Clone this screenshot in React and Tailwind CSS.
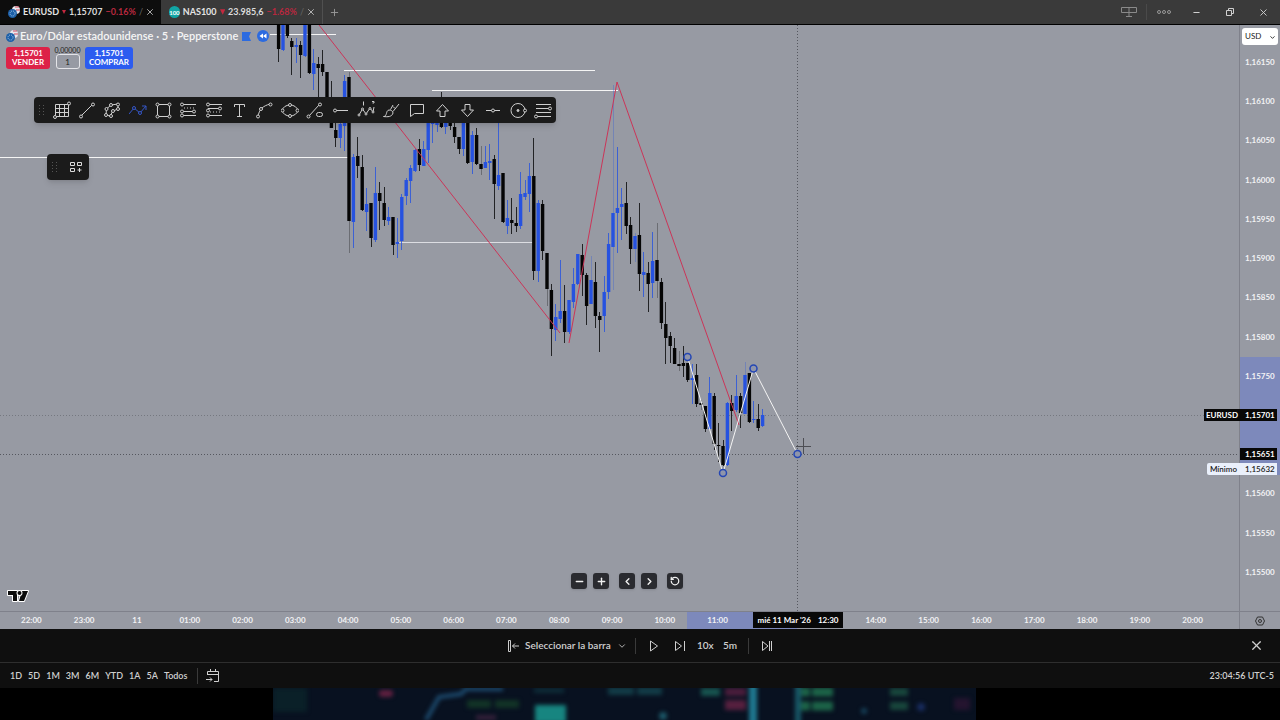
import { useState } from 'react'
import { ChevronDown, ChevronLeft, ChevronRight, Minus, Plus, RotateCcw, X } from 'lucide-react'

// up/down, body top, body bottom, wick top, wick bottom, wick opacity
const candles = [
  ['k', 20, 49, 20, 62], ['b', 20, 50, 20, 51], ['k', 20, 36, 20, 38], ['k', 41, 47, 38, 75],
  ['b', 45, 47, 38, 63], ['k', 45, 55, 41, 78], ['b', 20, 56, 20, 57], ['k', 20, 73, 20, 74],
  ['b', 63, 74, 49, 90], ['k', 64, 68, 57, 98], ['k', 64, 72, 50, 76], ['k', 72, 115, 72, 115],
  ['k', 98, 128, 81, 128], ['k', 130, 138, 122, 147], ['b', 124, 138, 122, 148], ['b', 81, 126, 75, 151],
  ['k', 77, 221, 72, 253, 0.3], ['b', 157, 222, 154, 248], ['k', 156, 166, 137, 178], ['k', 167, 210, 155, 211],
  ['b', 204, 212, 188, 231], ['k', 203, 238, 203, 247], ['b', 193, 240, 167, 242], ['k', 193, 201, 182, 230],
  ['k', 203, 220, 187, 226], ['b', 217, 221, 207, 225], ['k', 217, 245, 217, 255], ['b', 242, 244, 218, 258],
  ['b', 197, 241, 194, 250], ['b', 180, 196, 178, 205], ['b', 168, 181, 165, 203], ['b', 150, 171, 149, 172],
  ['k', 149, 165, 139, 171], ['b', 149, 166, 141, 166], ['b', 115, 150, 112, 163], ['b', 100, 124, 100, 143],
  ['b', 110, 125, 108, 132], ['k', 110, 127, 92, 128], ['b', 112, 127, 112, 134], ['k', 105, 126, 105, 130],
  ['k', 127, 137, 120, 143], ['k', 137, 149, 137, 154], ['b', 115, 149, 112, 156], ['k', 115, 163, 112, 164],
  ['b', 135, 162, 131, 174], ['k', 135, 164, 128, 165], ['k', 164, 169, 146, 175, 0.3], ['b', 162, 168, 146, 168],
  ['b', 161, 163, 144, 180], ['k', 159, 184, 155, 219], ['b', 175, 186, 115, 190], ['k', 173, 222, 173, 223],
  ['b', 218, 226, 200, 234], ['k', 220, 223, 198, 234], ['k', 223, 226, 207, 232], ['b', 194, 226, 172, 229],
  ['b', 193, 197, 180, 200], ['b', 176, 194, 163, 212], ['k', 176, 271, 138, 280], ['b', 203, 271, 200, 282],
  ['k', 204, 251, 200, 260], ['k', 253, 289, 253, 306, 0.3], ['k', 290, 329, 284, 356], ['b', 317, 330, 304, 341],
  ['b', 311, 319, 260, 323], ['k', 311, 332, 285, 343], ['b', 300, 332, 300, 334], ['b', 284, 302, 268, 308],
  ['b', 254, 284, 254, 285], ['k', 255, 275, 244, 296], ['k', 275, 306, 273, 325], ['b', 280, 304, 256, 304, 0.3],
  ['k', 282, 316, 262, 328], ['k', 316, 320, 312, 352], ['b', 292, 316, 276, 332], ['b', 244, 292, 233, 299],
  ['b', 213, 247, 85, 290, 0.3], ['b', 208, 213, 147, 253], ['b', 204, 207, 188, 240], ['k', 203, 226, 182, 234],
  ['k', 225, 249, 217, 264], ['b', 236, 249, 233, 262, 0.3], ['k', 235, 274, 203, 291], ['b', 272, 275, 252, 297],
  ['k', 273, 284, 262, 312], ['b', 261, 283, 232, 298], ['k', 260, 281, 223, 298, 0.3], ['k', 282, 323, 278, 329],
  ['k', 324, 338, 302, 364], ['k', 336, 346, 332, 363], ['k', 348, 364, 338, 364], ['k', 364, 366, 351, 371, 0.3],
  ['k', 363, 366, 346, 377], ['k', 363, 380, 363, 382], ['b', 378, 380, 364, 404], ['k', 375, 404, 364, 407],
  ['k', 403, 405, 400, 410, 0.3], ['k', 406, 429, 406, 432], ['b', 393, 429, 377, 430], ['k', 396, 444, 393, 450],
  ['k', 445, 446, 423, 462], ['k', 446, 465, 440, 466], ['b', 403, 465, 402, 466], ['k', 403, 411, 395, 431],
  ['b', 396, 410, 375, 412], ['k', 396, 413, 393, 428], ['b', 375, 414, 362, 414, 0.3], ['k', 373, 422, 373, 423],
  ['b', 419, 420, 401, 423], ['k', 419, 428, 404, 431], ['b', 415, 426, 409, 427],
]

const prices = ['1,16150', '1,16100', '1,16050', '1,16000', '1,15950', '1,15900', '1,15850',
  '1,15800', '1,15750', '', '', '1,15600', '1,15550', '1,15500']

const hours = ['22:00', '23:00', '11', '01:00', '02:00', '03:00', '04:00', '05:00', '06:00', '07:00',
  '08:00', '09:00', '10:00', '11:00', '', '', '14:00', '15:00', '16:00', '17:00', '18:00', '19:00', '20:00']

const ranges = ['1D', '5D', '1M', '3M', '6M', 'YTD', '1A', '5A', 'Todos']

const dot = (x, y) => <circle key={`${x}-${y}`} cx={x} cy={y} r="1.5" fill="#1b1b1b" />

const tools = [
  { label: 'Rejilla', art: <><path d="M2.500 3.500h13v12h-13zM6.500 3.500v12M11.500 3.500v12M2.500 7.500h13M2.500 11.500h13" />{dot(16, 2.5)}{dot(2, 16)}</> },
  { label: 'Línea de tendencia', art: <><path d="M3 15 15 3" />{dot(3, 15.5)}{dot(15, 3.5)}</> },
  { label: 'Ruta cerrada', art: <><path d="M3.500 8 8 4l7-1v5l-5 2-3 5-4-1z" />{dot(3.5, 8)}{dot(8, 4)}{dot(15, 3.5)}{dot(15, 8)}{dot(10, 10)}{dot(8, 15)}{dot(3, 14)}</> },
  { label: 'Polilínea', active: true, art: <><path d="m0 13 5-6 6 5 6-7M13 5h4v4" />{dot(5, 7)}{dot(11, 12)}</> },
  { label: 'Rectángulo', art: <><path d="M3.500 3.500h12v12h-12z" />{dot(3.5, 3.5)}{dot(15.5, 3.5)}{dot(3.5, 15.5)}{dot(15.5, 15.5)}</> },
  { label: 'Posición larga', art: <><path d="M3 3.500h14M3 10.500h12M3 14.500h14" /><path d="M5 7h10" strokeDasharray="1 2" />{dot(3, 3.5)}{dot(15, 10.5)}{dot(3, 10.5)}{dot(3, 14.5)}</> },
  { label: 'Posición corta', art: <><path d="M3 3.500h14M3 7.500h12M3 14.500h14" /><path d="M5 11h10" strokeDasharray="1 2" />{dot(3, 3.5)}{dot(15, 7.5)}{dot(3, 9.5)}{dot(3, 14.5)}</> },
  { label: 'Texto', art: <path d="M4.500 6V3.500h10V6M9.500 3.500v12M7 15.500h5" /> },
  { label: 'Curva', art: <><path d="M3 16C4 8 8 5 15 3" />{dot(3, 15.5)}{dot(6, 8)}{dot(15.5, 3.5)}</> },
  { label: 'Elipse', art: <><ellipse cx="9" cy="9.500" rx="7.500" ry="5.500" />{dot(9, 4)}{dot(9, 15)}{dot(1.5, 9.5)}{dot(16.5, 9.5)}</> },
  { label: 'Línea con nota', art: <><path d="M3 15 13 4" /><rect x="10.500" y="11.500" width="6" height="4" rx="2" />{dot(2.5, 15.5)}{dot(14, 3.5)}</> },
  { label: 'Rayo horizontal', art: <><path d="M4 9.500h13" />{dot(4, 9.5)}</> },
  { label: 'Ondas de Elliott', art: <><path d="m2 14 3.500-6L9 13l4-6 3 4 1-5" /><path d="M6.500.500v4M15 .500h2v1.500h-1.500" />{[[2, 14], [5.5, 8], [9, 13], [13, 7.500], [16, 11]].map(([x, y]) => <circle key={x} cx={x} cy={y} r="1" fill="#1b1b1b" />)}</> },
  { label: 'Pincel', art: <path d="M1.500 15.500c4 0 2-6 5.500-6.500 2 0 4 1 4 3-1 4-5.500 4-9.500 3.500zM8.500 8.500 11 4M11 10.500 17 3M11 5.500l2 2" /> },
  { label: 'Comentario', art: <path d="M3.500 3.500h13v9h-9l-4 3z" /> },
  { label: 'Flecha arriba', art: <path d="m9.500 3.500 6 6.500h-3.500v5.500H7V10H3.500z" /> },
  { label: 'Flecha abajo', art: <path d="m9.500 15.500-6-6.500H7V3.500h5V9h3.500z" /> },
  { label: 'Línea horizontal', art: <><path d="M2 9.500h14" />{dot(9, 9.5)}</> },
  { label: 'Círculo', art: <><circle cx="9" cy="9.500" r="7" /><circle cx="9" cy="9.500" r="1" fill="currentColor" />{dot(16, 9.5)}</> },
  { label: 'Retroceso de Fibonacci', art: <><path d="M2 3.500h15M2 7.500h15M2 11.500h15M2 15.500h15" />{dot(16, 7.5)}{dot(2, 15.5)}</> },
]

function Grip() {
  return (
    <svg className="w-2 h-3 text-[#555]" viewBox="0 0 8 12" fill="currentColor">
      {[1, 4, 7, 10].map(y => (
        <g key={y}><rect x="1" y={y} width="1" height="1" /><rect x="5" y={y} width="1" height="1" /></g>
      ))}
    </svg>
  )
}

function PairLogo() {
  return (
    <svg className="w-3 h-3 shrink-0" viewBox="0 0 12 12">
      <circle cx="8" cy="4" r="4" fill="#e8e8ee" />
      <path d="M7 1h4M8 4h4" stroke="#d14a5c" />
      <circle cx="4.500" cy="7.500" r="4.500" fill="#1c5fa8" />
      <circle cx="4.500" cy="7.500" r="2.500" fill="none" stroke="#a9c8e8" strokeDasharray="1 1" />
    </svg>
  )
}

function Tab({ logo, symbol, price, change, active }) {
  return (
    <div className={active
      ? 'flex items-center w-[161px] pl-2 pr-1 bg-[#0d0d0d]'
      : 'flex items-center w-[161px] pl-2 pr-1'}>
      {logo}
      <span className="ml-[3px] text-[9px] font-bold text-[#e4e4e4]">{symbol}</span>
      <svg className="ml-[3px] w-[6px] h-[6px]" viewBox="0 0 6 6"><path d="M0 0h6L3 6z" fill="#c4283f" /></svg>
      <span className="ml-[3px] text-[9px] font-bold text-[#dcdcdc]">{price}</span>
      <span className="ml-[3px] text-[9px] font-bold text-[#b8283f]">{change}</span>
      <span className="ml-[3px] text-[9px] text-[#666]">/</span>
      <button aria-label={`Cerrar ${symbol}`} className="ml-auto p-[2px] text-[#c8c8c8]">
        <X size={10} strokeWidth={2} />
      </button>
    </div>
  )
}

function Header() {
  return (
    <header className="flex items-stretch h-[25px] bg-[#3a3a3a] border-b border-black">
      <Tab active logo={<PairLogo />} symbol="EURUSD" price="1,15707" change="−0.16%" />
      <Tab
        logo={
          <span className="flex items-center justify-center w-3 h-3 rounded-full bg-[#12a5a5] text-[6px] font-bold text-white">100</span>
        }
        symbol="NAS100" price="23.985,6" change="−1.68%"
      />
      <button aria-label="Nueva pestaña" className="flex items-center justify-center w-6 border-l border-[#505050] text-[#999]">
        <Plus size={11} strokeWidth={2} />
      </button>
      <div className="ml-auto flex items-center text-[#d0d0d0]">
        <button aria-label="Diseño" className="w-[34px] flex justify-center text-[#8a8a8a]">
          <svg className="w-4 h-3" viewBox="0 0 16 12" fill="none" stroke="currentColor">
            <path d="M.500 1.500h15v5H.500zM8 1.500v9M5 10.500h6" />
          </svg>
        </button>
        <button aria-label="Más" className="w-[34px] h-4 flex items-center justify-center border-l border-[#4a4a4a] text-[#999]">
          <svg className="w-[14px] h-1" viewBox="0 0 14 4" fill="none" stroke="currentColor">
            <circle cx="2" cy="2" r="1.500" /><circle cx="7" cy="2" r="1.500" /><circle cx="12" cy="2" r="1.500" />
          </svg>
        </button>
        <button aria-label="Minimizar" className="w-[33px] flex justify-center"><Minus size={9} strokeWidth={3} /></button>
        <button aria-label="Restaurar" className="w-[33px] flex justify-center">
          <svg className="w-2 h-2" viewBox="0 0 8 8" fill="none" stroke="currentColor">
            <path d="M.500 2.500h5v5h-5zM2.500 2.500v-2h5v5h-2" />
          </svg>
        </button>
        <button aria-label="Cerrar" className="w-[34px] flex justify-center"><X size={11} strokeWidth={2} /></button>
      </div>
    </header>
  )
}

function Candle({ i, data }) {
  const [kind, top, bottom, wickTop, wickBottom, wickOpacity = 0.8] = data
  const x = 278.6 + i * 4.4
  const fill = kind === 'k' ? '#050505' : '#2652e0'
  return (
    <g fill={fill}>
      <rect x={Math.round(x - 0.5)} y={wickTop} width="1" height={wickBottom - wickTop} opacity={wickOpacity} />
      <rect x={x - 1.7} y={top} width="3.400" height={bottom - top} />
    </g>
  )
}

function Chart() {
  return (
    <svg className="absolute inset-0 w-full h-full" viewBox="0 25 1239 586" preserveAspectRatio="xMinYMin meet">
      <g stroke="#55575f" strokeDasharray="1 2">
        <path d="M0 415.500h1239" opacity="0.5" />
        <path d="M0 454.500h1239M797.500 25v586" />
      </g>
      <path d="M270 34.500h66M344 70.500h251M432 90.500h186M0 157.500h348" stroke="#f5f5f5" fill="none" />
      <path d="M398 242.500h137" stroke="#dcdde2" />
      {candles.map((c, i) => <Candle key={i} i={i} data={c} />)}
      <path d="M319 25 560 333M569 343 617 82l122 343" stroke="#cb3558" fill="none" />
      <path d="m687.500 357 35.500 116 30.500-104.500 44 85.500" stroke="#f4f4f4" fill="none" />
      {[[687.5, 357], [723, 473], [753.5, 368.5], [797.5, 454]].map(([x, y]) => (
        <circle key={x} cx={x} cy={y} r="3.500" fill="#8f95aa" stroke="#2446b4" strokeWidth="1.500" />
      ))}
      <path d="M796 446.500h15M803.500 438v16" stroke="#4d4e54" />
    </svg>
  )
}

function Legend() {
  const [qty, setQty] = useState('1')
  return (
    <div className="absolute left-[6px] top-[3px] flex flex-col gap-[3px]">
      <div className="flex items-center h-4">
        <PairLogo />
        <h1 className="ml-[2px] text-[11px] leading-4 font-semibold text-[#f5f5f5] whitespace-nowrap">
          Euro/Dólar estadounidense · 5 · Pepperstone
        </h1>
        <svg className="ml-1 w-[9px] h-[9px]" viewBox="0 0 9 9"><path d="M0 0h9L7 4.500 9 9H0z" fill="#2c6be0" /></svg>
        <svg className="ml-[6px] w-3 h-3" viewBox="0 0 12 12">
          <circle cx="6" cy="6" r="6" fill="#2c6be0" />
          <path d="M6 3.500v5L2.500 6zM9.500 3.500v5L6 6z" fill="#fff" />
        </svg>
      </div>
      <div className="flex items-start">
        <button className="w-[44px] h-[22px] rounded-[3px] bg-[#dd2248] text-white text-[8px] leading-[9px] font-bold">
          <span className="block">1,1570<span className="text-[7px]">1</span></span>
          <span className="block">VENDER</span>
        </button>
        <div className="flex flex-col items-center w-[35px]">
          <label htmlFor="qty" className="text-[7px] leading-[7px] text-[#222]">0,00000</label>
          <input id="qty" value={qty} onChange={e => setQty(e.target.value)}
            className="w-6 h-[15px] rounded-[3px] border border-[#e4e4e8] text-center text-[8px] text-[#222]" />
        </div>
        <button className="w-[48px] h-[22px] rounded-[3px] bg-[#2c5cf0] text-white text-[8px] leading-[9px] font-bold">
          <span className="block">1,1570<span className="text-[7px]">1</span></span>
          <span className="block">COMPRAR</span>
        </button>
      </div>
    </div>
  )
}

function DrawingBar() {
  return (
    <>
      <div className="absolute left-[34px] top-[72px] flex items-stretch w-[522px] h-[26px] rounded bg-[#1b1b1b] shadow-md">
        <div className="flex items-center justify-center w-[15px]"><Grip /></div>
        {tools.map(t => (
          <button key={t.label} aria-label={t.label}
            className={t.active ? 'flex-1 flex items-center justify-center text-[#3557c8]' : 'flex-1 flex items-center justify-center text-[#cfcfcf]'}>
            <svg className="w-[18px] h-[18px]" viewBox="0 0 18 18" fill="none" stroke="currentColor">{t.art}</svg>
          </button>
        ))}
      </div>
      <div className="absolute left-[47px] top-[129px] flex items-center w-[42px] h-[26px] rounded bg-[#1b1b1b] shadow-md">
        <div className="flex items-center justify-center w-[15px]"><Grip /></div>
        <button aria-label="Añadir herramienta" className="flex-1 flex items-center justify-center text-[#dcdcdc]">
          <svg className="w-3 h-3" viewBox="0 0 12 12" fill="none" stroke="currentColor">
            <path d="M.500 1.500h4v3h-4zM7.500 1.500h4v3h-4zM.500 7.500h4v3h-4zM9.500 7v4M7.500 9h4" />
          </svg>
        </button>
      </div>
    </>
  )
}

function NavButton({ label, children }) {
  return (
    <button aria-label={label} className="flex items-center justify-center w-4 h-4 rounded-[3px] bg-[#2a2b30] text-[#f0f0f0] shadow">
      {children}
    </button>
  )
}

function ZoomControls() {
  return (
    <div className="absolute left-[571px] bottom-[22px] flex gap-[10px]">
      <div className="flex gap-[6px]">
        <NavButton label="Alejar"><Minus size={11} strokeWidth={3} /></NavButton>
        <NavButton label="Acercar"><Plus size={11} strokeWidth={3} /></NavButton>
      </div>
      <div className="flex gap-[6px]">
        <NavButton label="Atrás"><ChevronLeft size={11} strokeWidth={3} /></NavButton>
        <NavButton label="Adelante"><ChevronRight size={11} strokeWidth={3} /></NavButton>
      </div>
      <NavButton label="Restablecer"><RotateCcw size={10} strokeWidth={3} /></NavButton>
    </div>
  )
}

function PriceAxis() {
  return (
    <div className="relative flex flex-col w-[41px] border-l border-[#7f818b] pb-[31px]">
      {/* Selected price range */}
      <div className="absolute inset-x-0 top-[332px] h-[118px] bg-[#7d89bb]" />
      <div className="relative mt-[3px] mx-[2px] h-[17px]">
        <select aria-label="Divisa" className="block w-full h-[17px] rounded-[3px] bg-white pl-[3px] text-[8px] leading-[17px] text-[#222] appearance-none">
          <option>USD</option>
        </select>
        <ChevronDown size={7} strokeWidth={3} className="absolute right-[2px] top-[6px] text-[#222]" />
      </div>
      <div className="relative flex-1 flex flex-col justify-between mt-[9px] pl-[5px] text-[8px] leading-4 font-bold text-[#f2f2f4]">
        {prices.map((p, i) => <span key={i} className="h-4">{p}</span>)}
      </div>

      {/* Price flags */}
      <div className="absolute right-[3px] top-[384px] flex h-3 text-[8px] leading-3 font-bold text-white whitespace-nowrap">
        <span className="px-[2px] bg-[#080808]">EURUSD</span>
        <span className="w-[37px] pl-[5px] bg-[#080808]">1,15701</span>
      </div>
      <div className="absolute right-[3px] top-[423px] w-[37px] h-3 pl-[5px] bg-[#080808] text-[8px] leading-3 font-bold text-white">
        1,15651
      </div>
      <div className="absolute right-[3px] top-[438px] flex h-3 text-[8px] leading-3 font-semibold text-[#222] whitespace-nowrap">
        <span className="px-[3px] rounded-l-[2px] bg-[#eaf0fb]">Mínimo</span>
        <span className="w-[37px] pl-[5px] bg-[#eaf0fb]">1,15632</span>
      </div>
    </div>
  )
}

function TimeAxis() {
  return (
    <div className="relative flex h-[18px] border-t border-[#7f818b] text-[8px] leading-4 font-bold text-[#f2f2f4]">
      <div className="absolute left-[687px] inset-y-0 w-[110px] bg-[#7d89bb]" />
      <div className="relative flex flex-1 pl-[5px] pr-5">
        {hours.map((h, i) => <span key={i} className="flex-1 text-center">{h}</span>)}
      </div>
      <div className="absolute left-[753px] top-0 w-[90px] h-4 flex items-center justify-center gap-[7px] bg-[#080808] text-white">
        <span>mié 11 Mar '26</span><span>12:30</span>
      </div>
      <button aria-label="Ajustes" className="w-[41px] flex items-center justify-center border-l border-[#7f818b] text-[#333]">
        <svg className="w-[10px] h-[10px]" viewBox="0 0 10 10" fill="none" stroke="currentColor">
          <path d="M2.500 1h5l2 4-2 4h-5l-2-4z" /><circle cx="5" cy="5" r="1.500" />
        </svg>
      </button>
    </div>
  )
}

function ReplayBar() {
  return (
    <div className="relative flex items-center h-[34px] pl-[507px] bg-[#0f0f0f] border-b border-[#2e2e2e] text-[10px] font-semibold text-[#cfcfcf]">
      <button className="flex items-center">
        <svg className="w-3 h-3" viewBox="0 0 12 12" fill="none" stroke="currentColor">
          <path d="M1.500 .500h2v11h-2zM12 6H5.500M8 3.500 5.500 6 8 8.500" />
        </svg>
        <span className="ml-[6px] w-[88px] text-left whitespace-nowrap">Seleccionar la barra</span>
        <ChevronDown size={10} className="ml-1" />
      </button>
      <div className="ml-2 w-px h-4 bg-[#3a3a3a]" />
      <button aria-label="Reproducir" className="ml-3">
        <svg className="w-3 h-3" viewBox="0 0 12 12" fill="none" stroke="currentColor"><path d="M2.500 1v10L9.500 6z" /></svg>
      </button>
      <button aria-label="Avanzar" className="ml-[14px]">
        <svg className="w-3 h-3" viewBox="0 0 12 12" fill="none" stroke="currentColor"><path d="M1.500 1.500v9L7.500 6zM10.500 1v10" /></svg>
      </button>
      <button className="ml-[11px] w-4 whitespace-nowrap">10x</button>
      <button className="ml-[9px] w-4 whitespace-nowrap">5m</button>
      <div className="ml-[10px] w-px h-4 bg-[#3a3a3a]" />
      <button aria-label="Tiempo real" className="ml-3">
        <svg className="w-3 h-3" viewBox="0 0 12 12" fill="none" stroke="currentColor"><path d="M1.500 1.500v9L7 6zM8.500 1v10M10.500 1v10" /></svg>
      </button>
      <button aria-label="Cerrar reproducción" className="ml-auto mr-4"><X size={15} strokeWidth={2} /></button>
    </div>
  )
}

function RangeBar() {
  return (
    <div className="flex items-center h-[25px] px-[6px] bg-[#0f0f0f] text-[9px] font-semibold text-[#cfcfcf]">
      <div className="flex gap-[6px] pl-1">
        {ranges.map(r => <button key={r}>{r}</button>)}
      </div>
      <div className="ml-[10px] w-px h-4 bg-[#3a3a3a]" />
      <button aria-label="Ir a la fecha" className="ml-2">
        <svg className="w-[14px] h-[14px]" viewBox="0 0 14 14" fill="none" stroke="currentColor">
          <path d="M1.500 6V2.500h11v10H8M1.500 5.500h11M4.500 0v3M9.500 0v3M0 10.500h6M4 8.500l2 2-2 2" />
        </svg>
      </button>
      <span className="ml-auto">23:04:56 UTC-5</span>
    </div>
  )
}

function Backdrop() {
  return (
    <div className="h-8 pl-[273px] bg-black overflow-hidden">
      <svg className="w-[703px] h-8 bg-[#081120]" viewBox="273 688 703 32">
        <g className="blur-[2px]">
          <rect x="273" y="688" width="34" height="24" fill="#0a2028" />
          <path d="m426 720 13-23 22-3 5-5h37" fill="none" stroke="#1d4c70" strokeWidth="4" />
          <rect x="379" y="690" width="14" height="7" rx="3" fill="#602040" />
          <path d="M467 704h24M495 704h24" stroke="#123326" strokeWidth="8" />
          <rect x="476" y="715" width="20" height="5" fill="#35203a" />
          <rect x="535" y="705" width="31" height="18" fill="#178580" />
          <rect x="534" y="688" width="30" height="5" fill="#0e2c38" />
          <path d="M608 691h26M637 691h25" stroke="#123b46" strokeWidth="8" />
          <circle cx="663" cy="716" r="4" fill="#1c5868" />
          <rect x="701" y="688" width="19" height="8" fill="#17544f" />
          <rect x="725" y="688" width="21" height="8" fill="#4b1d3c" />
          <rect x="725" y="700" width="21" height="10" fill="#56203f" />
          <rect x="749" y="682" width="8" height="44" fill="#1f7890" />
          <rect x="795" y="682" width="6" height="44" fill="#175666" />
          <path d="M801 692h9M812 692h21M801 706h9M812 706h21" stroke="#1c6448" strokeWidth="9" />
          <circle cx="864" cy="711" r="3" fill="#17445c" />
          <path d="M890 692h18M890 706h18" stroke="#18463c" strokeWidth="8" />
          <circle cx="921" cy="707" r="4" fill="#182c60" />
          <rect x="954" y="698" width="16" height="12" fill="#24142f" />
        </g>
      </svg>
    </div>
  )
}

export default function App() {
  return (
    <div className="flex flex-col min-h-screen bg-black font-['Lato',sans-serif]">
      <Header />
      <main className="flex-1 flex flex-col bg-[#979aa3]">
        <div className="flex-1 flex">
          <div className="relative flex-1 overflow-hidden">
            <Chart />
            <Legend />
            <DrawingBar />
            <ZoomControls />
            <svg className="absolute left-[7px] bottom-[7px] w-[22px] h-[15px]" viewBox="0 0 22 15">
              <g fill="#0b0b0b" stroke="#fff" strokeWidth="2" paintOrder="stroke" strokeLinejoin="round">
                <path d="M1 2h9v10H6V6H1zM15 2h6l-4 10h-5z" />
                <circle cx="12.500" cy="4" r="2" />
              </g>
            </svg>
          </div>
          <PriceAxis />
        </div>
        <TimeAxis />
      </main>
      <ReplayBar />
      <RangeBar />
      <Backdrop />
    </div>
  )
}
